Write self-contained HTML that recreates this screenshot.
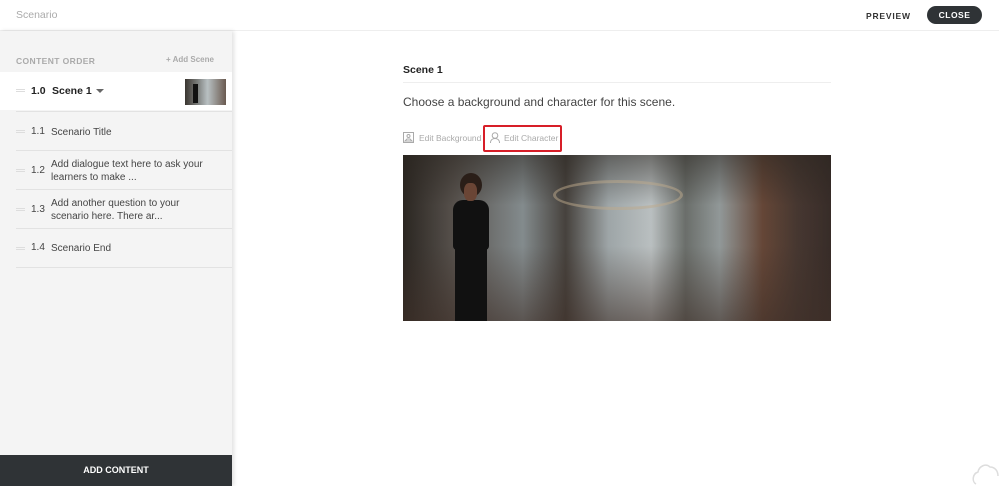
<!DOCTYPE html>
<html><head><style>
*{margin:0;padding:0;box-sizing:border-box}
body{width:999px;height:486px;overflow:hidden;background:#fff;font-family:"Liberation Sans",sans-serif;position:relative}
.hdr{position:absolute;left:0;top:0;width:999px;height:31px;border-bottom:1px solid #eee;background:#fff}
.abs{position:absolute}
.side{position:absolute;left:0;top:31px;width:232px;height:455px;background:#f4f4f4;box-shadow:2px 0 4px rgba(0,0,0,.12)}
.row{position:absolute;left:16px;width:216px;border-top:1px solid #e2e2e2;font-size:10px;color:#444}
.dr{position:absolute;left:0;width:9px;height:3px;border-top:1px solid #ddd;border-bottom:1px solid #ddd}
.num{position:absolute;left:15px}
.txt{position:absolute;left:35px;line-height:13px}
</style></head><body>
<div class="hdr">
<div class="abs" style="left:16px;top:9px;font-size:10.5px;color:#aaa">Scenario</div>
<div class="abs" style="left:866px;top:11px;font-size:8.5px;font-weight:bold;letter-spacing:.8px;color:#333">PREVIEW</div>
<div class="abs" style="left:927px;top:6px;width:55px;height:18px;border-radius:9px;background:#2f3336;color:#fff;font-size:8.5px;font-weight:bold;text-align:center;line-height:18px;letter-spacing:.5px">CLOSE</div>
</div>
<div class="side">
<div class="abs" style="left:16px;top:25px;font-size:8.5px;font-weight:bold;color:#aaa;letter-spacing:.4px">CONTENT ORDER</div>
<div class="abs" style="left:166px;top:24px;font-size:8px;font-weight:bold;color:#aaa">+ Add Scene</div>
<div class="abs" style="left:0;top:41px;width:232px;height:38px;background:#fff">
 <div class="dr" style="left:16px;top:17px"></div>
 <div class="abs" style="left:31px;top:13px;font-size:10.5px;font-weight:bold;color:#222">1.0</div>
 <div class="abs" style="left:52px;top:13px;font-size:10.5px;font-weight:bold;color:#222">Scene 1</div>
 <div class="abs" style="left:96px;top:17px;border:4px solid transparent;border-top:4px solid #666"></div>
 <div class="abs" style="left:185px;top:7px;width:41px;height:26px;background:linear-gradient(90deg,#3a3530,#7a7c7a 30%,#b8c0c2 55%,#6a5a50)"><div class="abs" style="left:8px;top:5px;width:5px;height:19px;background:#111"></div></div>
</div>
<div class="row" style="top:80px;height:39px"><div class="dr" style="top:18px"></div><span class="num" style="top:14px">1.1</span><span class="txt" style="top:14px">Scenario Title</span></div>
<div class="row" style="top:119px;height:39px"><div class="dr" style="top:18px"></div><span class="num" style="top:14px">1.2</span><span class="txt" style="top:7px">Add dialogue text here to ask your<br>learners to make ...</span></div>
<div class="row" style="top:158px;height:39px"><div class="dr" style="top:18px"></div><span class="num" style="top:14px">1.3</span><span class="txt" style="top:7px">Add another question to your<br>scenario here. There ar...</span></div>
<div class="row" style="top:197px;height:40px;border-bottom:1px solid #e2e2e2"><div class="dr" style="top:18px"></div><span class="num" style="top:13px">1.4</span><span class="txt" style="top:13px">Scenario End</span></div>
<div class="abs" style="left:0;top:424px;width:232px;height:31px;background:#2f3336;color:#fff;font-size:9px;font-weight:bold;text-align:center;line-height:31px">ADD CONTENT</div>
</div>
<div class="abs" style="left:403px;top:64px;font-size:10.5px;font-weight:bold;color:#222">Scene 1</div>
<div class="abs" style="left:403px;top:82px;width:428px;border-top:1px solid #eee"></div>
<div class="abs" style="left:403px;top:95px;font-size:12px;color:#444">Choose a background and character for this scene.</div>
<svg class="abs" style="left:403px;top:132px" width="11" height="11"><rect x=".5" y=".5" width="10" height="10" fill="none" stroke="#aaa"/><circle cx="5.5" cy="4" r="1.5" fill="none" stroke="#aaa"/><path d="M2 9h7l-2-2h-3z" fill="none" stroke="#aaa"/></svg>
<div class="abs" style="left:419px;top:133px;font-size:8.5px;color:#aaa">Edit Background</div>
<div class="abs" style="left:483px;top:125px;width:79px;height:27px;border:2px solid #d71e28;border-radius:2px"></div>
<svg class="abs" style="left:490px;top:132px" width="10" height="11"><circle cx="5" cy="3.5" r="2.8" fill="none" stroke="#aaa"/><path d="M.5 11c0-3 2-4.5 4.5-4.5s4.5 1.5 4.5 4.5" fill="none" stroke="#aaa"/></svg>
<div class="abs" style="left:504px;top:133px;font-size:8.5px;color:#aaa">Edit Character</div>
<div class="abs" style="left:403px;top:155px;width:428px;height:166px;overflow:hidden;background:linear-gradient(90deg,#2d2823 0%,#5b5550 12%,#8a9294 28%,#4a4540 38%,#a6aeb0 48%,#c3c9ca 58%,#707470 66%,#99a0a0 74%,#6a4a3a 84%,#4a3a33 92%,#3a2e2a 100%)">
<div class="abs" style="left:0;top:0;width:428px;height:166px;background:linear-gradient(180deg,rgba(40,35,30,.55) 0%,rgba(0,0,0,.05) 30%,rgba(0,0,0,.05) 55%,rgba(60,45,38,.6) 100%)"></div>
<div class="abs" style="left:150px;top:25px;width:130px;height:30px;border:3px solid rgba(190,170,140,.5);border-radius:50%"></div>
<div class="abs" style="left:57px;top:18px;width:22px;height:24px;border-radius:50%;background:#2a1e18"></div>
<div class="abs" style="left:50px;top:45px;width:36px;height:50px;border-radius:10px 10px 4px 4px;background:#111"></div>
<div class="abs" style="left:52px;top:93px;width:32px;height:73px;background:#111"></div>
<div class="abs" style="left:61px;top:28px;width:13px;height:18px;background:#6a4535;border-radius:40%"></div>
</div>
<svg class="abs" style="left:972px;top:458px" width="27" height="28"><path d="M4 26c-4-2-4-10 2-12 1-6 8-9 12-5 5 0 8 4 8 9" fill="none" stroke="#ddd" stroke-width="1.5"/></svg>
</body></html>
